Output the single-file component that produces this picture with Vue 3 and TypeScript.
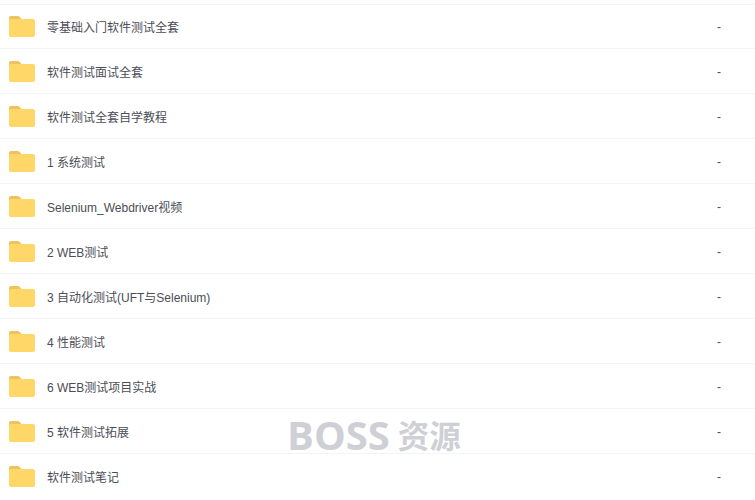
<script setup lang="ts">
const folders: string[] = [
  '零基础入门软件测试全套',
  '软件测试面试全套',
  '软件测试全套自学教程',
  '1 系统测试',
  'Selenium_Webdriver视频',
  '2 WEB测试',
  '3 自动化测试(UFT与Selenium)',
  '4 性能测试',
  '6 WEB测试项目实战',
  '5 软件测试拓展',
  '软件测试笔记',
]
</script>

<template>
  <div class="page">
    <ul class="list">
      <li v-for="name in folders" :key="name" class="row">
        <svg class="folder" width="26" height="21" viewBox="0 0 26 21">
          <path d="M0 2C0 .9 .9 0 2 0h6.500c.8 0 1.500.3 2 .8L12.500 3H2v3H0z" fill="#eec25f" />
          <path d="M0 5C0 3.900 .9 3 2 3h22c1.100 0 2 .9 2 2v14c0 1.100-.9 2-2 2H2c-1.100 0-2-.9-2-2z" fill="#ffd768" />
        </svg>
        <span class="name">{{ name }}</span>
        <span class="size">-</span>
      </li>
    </ul>
    <div class="watermark">
      <span>BOSS</span>
      <span class="wm-cn">资源</span>
    </div>
  </div>
</template>

<style scoped>
.page {
  position: relative;
  width: 755px;
  height: 500px;
  overflow: hidden;
  background: #fff;
  font-family: "Liberation Sans", "Noto Sans CJK SC", sans-serif;
}

.list {
  list-style: none;
  margin: 0;
  padding: 4px 0 0;
}

.row {
  display: flex;
  align-items: center;
  box-sizing: border-box;
  height: 45px;
  padding: 0 34px 0 9px;
  border-top: 1px solid #f3f4f5;
}

.row:first-child {
  height: 44px;
}

.folder {
  flex-shrink: 0;
  margin-right: 12px;
}

.name {
  flex: 1;
  font-size: 12px;
  color: #4a4e56;
}

.size {
  font-size: 12px;
  margin-top: 2px;
  color: #4a4e56;
}

.watermark {
  position: absolute;
  left: 287px;
  top: 412px;
  display: flex;
  align-items: center;
  gap: 8px;
  height: 44px;
  font-family: "Open Sans", "Noto Sans CJK SC", sans-serif;
  font-size: 40px;
  font-weight: 700;
  color: #cfd0d5;
  white-space: nowrap;
}

.wm-cn {
  font-size: 31.500px;
}

.row:first-child .size {
  margin-top: 1px;
}
</style>
